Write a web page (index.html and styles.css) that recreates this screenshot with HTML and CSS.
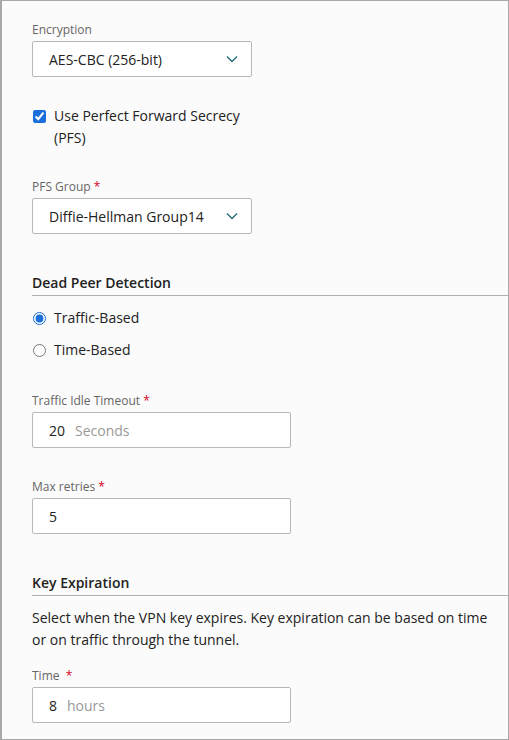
FILE: index.html
```html
<!DOCTYPE html>
<html>
<head>
<meta charset="utf-8">
<link rel="stylesheet" href="styles.css">
</head>
<body>
<div class="frame">
  <div class="field">
    <div class="label">Encryption</div>
    <div class="select"><span>AES-CBC (256-bit)</span>
      <svg class="chev" width="12" height="8" viewBox="0 0 12 8"><path d="M1 1.5 L6 6.5 L11 1.5" fill="none" stroke="#1f6b73" stroke-width="1.3"/></svg>
    </div>
  </div>

  <label class="check">
    <input type="checkbox" checked>
    <span>Use Perfect Forward Secrecy (PFS)</span>
  </label>

  <div class="field pfs">
    <div class="label">PFS Group <span class="req">*</span></div>
    <div class="select"><span>Diffie-Hellman Group14</span>
      <svg class="chev" width="12" height="8" viewBox="0 0 12 8"><path d="M1 1.5 L6 6.5 L11 1.5" fill="none" stroke="#1f6b73" stroke-width="1.3"/></svg>
    </div>
  </div>

  <h3 class="heading">Dead Peer Detection</h3>

  <div class="radios">
    <label class="radio"><input type="radio" name="dpd" checked><span>Traffic-Based</span></label>
    <label class="radio"><input type="radio" name="dpd"><span>Time-Based</span></label>
  </div>

  <div class="field after-radio">
    <div class="label">Traffic Idle Timeout <span class="req">*</span></div>
    <div class="input wide"><span class="val">20</span><span class="unit">Seconds</span></div>
  </div>

  <div class="field next">
    <div class="label">Max retries <span class="req">*</span></div>
    <div class="input wide"><span class="val">5</span></div>
  </div>

  <h3 class="heading">Key Expiration</h3>

  <p class="desc">Select when the VPN key expires. Key expiration can be based on time or on traffic through the tunnel.</p>

  <div class="field time">
    <div class="label">Time &nbsp;<span class="req">*</span></div>
    <div class="input wide"><span class="val">8</span><span class="unit">hours</span></div>
  </div>
</div>
</body>
</html>
```

FILE: styles.css
```css
html, body {
  margin: 0;
  padding: 0;
}
body {
  font-family: "Open Sans", "Noto Sans", sans-serif;
  color: #222;
  background: #fbfbfb;
}
.frame {
  width: 509px;
  height: 740px;
  box-sizing: border-box;
  border: 1px solid #a8a8a8;
  border-left-width: 2px;
  background: #fbfbfb;
  padding: 20px 0 0 30px;
  overflow: hidden;
}
.field {
  display: flex;
  flex-direction: column;
  gap: 2px;
}
.label {
  font-size: 12px;
  line-height: 18px;
  color: #666;
}
.req {
  color: #d0021b;
}
.select, .input {
  box-sizing: border-box;
  height: 36px;
  border: 1px solid #b8b8b8;
  border-radius: 2px;
  background: #fff;
  display: flex;
  align-items: center;
  padding: 0 13px 0 16px;
  font-size: 14px;
}
.select {
  width: 220px;
  justify-content: space-between;
}
.input.wide {
  width: 259px;
}
.val {
  color: #222;
}
.unit {
  color: #999;
  margin-left: 10px;
}
.check {
  display: flex;
  align-items: flex-start;
  gap: 8px;
  width: 220px;
  margin-top: 28px;
  font-size: 14px;
  line-height: 22px;
}
.check input {
  width: 13px;
  height: 13px;
  margin: 5px 0 0 1px;
  accent-color: #1a6fdc;
}
.pfs {
  margin-top: 29px;
}
.heading {
  margin: 38px 0 0 0;
  font-size: 14px;
  font-weight: 600;
  line-height: 22px;
  padding-bottom: 1px;
  border-bottom: 1px solid #b0b0b0;
  color: #222;
}
.radios {
  display: flex;
  flex-direction: column;
  gap: 10px;
  margin-top: 11px;
}
.radio {
  display: flex;
  align-items: center;
  gap: 8px;
  font-size: 14px;
  line-height: 22px;
}
.radio input {
  width: 13px;
  height: 13px;
  margin: 0 0 0 1px;
  accent-color: #1a6fdc;
}
.after-radio {
  margin-top: 31px;
}
.next {
  margin-top: 30px;
}
.desc {
  margin: 11px 0 0 0;
  width: 470px;
  font-size: 14px;
  line-height: 22px;
}
.time {
  margin-top: 16px;
}
```
